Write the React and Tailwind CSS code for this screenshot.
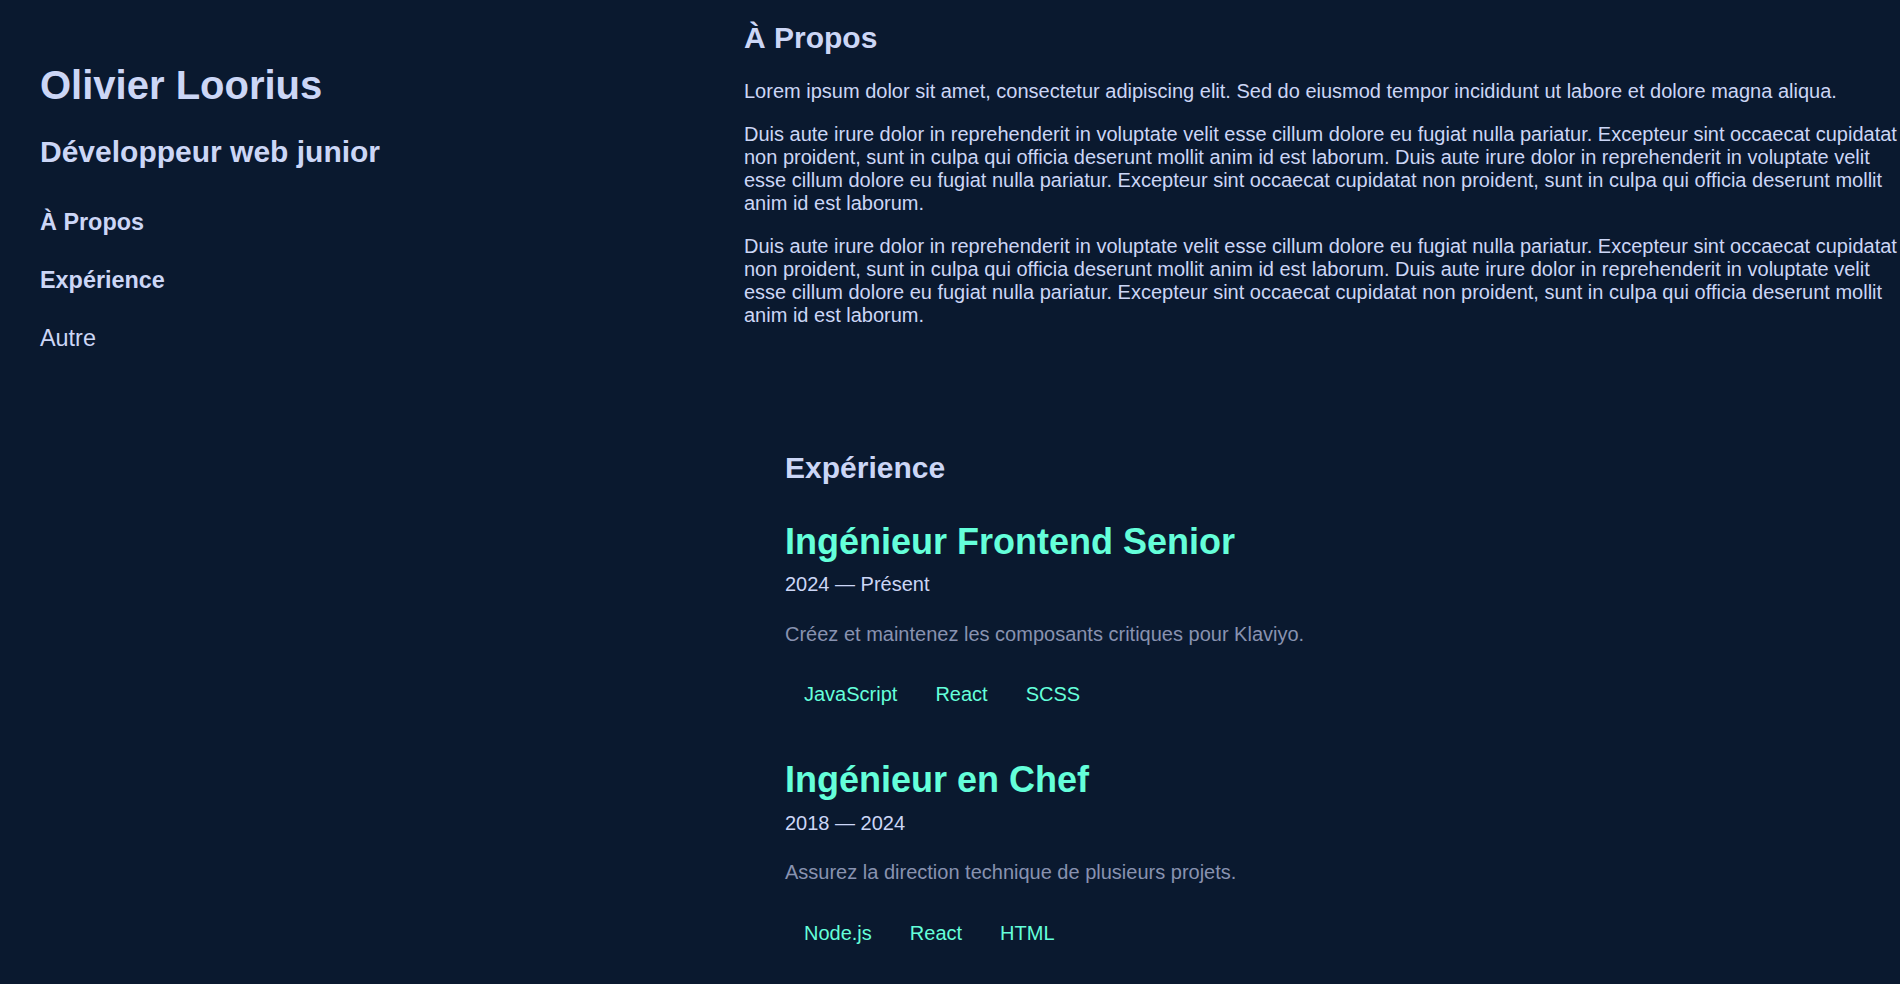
import React from "react";

const jobs = [
  {
    title: "Ingénieur Frontend Senior",
    date: "2024 — Présent",
    desc: "Créez et maintenez les composants critiques pour Klaviyo.",
    tags: ["JavaScript", "React", "SCSS"],
  },
  {
    title: "Ingénieur en Chef",
    date: "2018 — 2024",
    desc: "Assurez la direction technique de plusieurs projets.",
    tags: ["Node.js", "React", "HTML"],
  },
];

const lorem2 =
  "Duis aute irure dolor in reprehenderit in voluptate velit esse cillum dolore eu fugiat nulla pariatur. Excepteur sint occaecat cupidatat non proident, sunt in culpa qui officia deserunt mollit anim id est laborum. Duis aute irure dolor in reprehenderit in voluptate velit esse cillum dolore eu fugiat nulla pariatur. Excepteur sint occaecat cupidatat non proident, sunt in culpa qui officia deserunt mollit anim id est laborum.";

export default function App() {
  return (
    <div className="min-h-screen w-full bg-[#0a192f] font-['Liberation_Sans',Arial,sans-serif] leading-[normal] text-[#ccd6f6] flex">
      <header className="w-[744px] shrink-0 pl-10 pt-[62.5px]">
        <h1 className="text-[40px] font-bold">Olivier Loorius</h1>
        <h2 className="mt-[27.6px] text-[30px] font-bold">Développeur web junior</h2>
        <nav className="mt-[40.3px] flex flex-col gap-[30.9px] text-[23.4px]">
          <a className="font-bold">À Propos</a>
          <a className="font-bold">Expérience</a>
          <a>Autre</a>
        </nav>
      </header>
      <main className="flex-1 min-w-0 pt-[21px]">
        <section>
          <h2 className="text-[30px] font-bold mb-[25.3px]">À Propos</h2>
          <div className="flex flex-col gap-5 text-[20px]">
            <p>
              Lorem ipsum dolor sit amet, consectetur adipiscing elit. Sed do eiusmod tempor incididunt ut labore et dolore magna aliqua.
            </p>
            <p>{lorem2}</p>
            <p>{lorem2}</p>
          </div>
        </section>
        <section className="mt-[124px] pl-[41px] pb-10">
          <h2 className="text-[30px] font-bold mb-[35.6px]">Expérience</h2>
          <div className="flex flex-col gap-[52.9px]">
            {jobs.map((j) => (
              <article key={j.title}>
                <h3 className="text-[36px] font-bold text-[#64ffda]">{j.title}</h3>
                <p className="mt-[10.4px] text-[20px] text-[#ccd6f6]">{j.date}</p>
                <p className="mt-[26.5px] text-[20px] text-[#8892b0]">{j.desc}</p>
                <ul className="mt-[37.5px] flex text-[20px] text-[#64ffda]">
                  {j.tags.map((t) => (
                    <li key={t} className="px-[19px]">
                      {t}
                    </li>
                  ))}
                </ul>
              </article>
            ))}
          </div>
        </section>
      </main>
    </div>
  );
}
